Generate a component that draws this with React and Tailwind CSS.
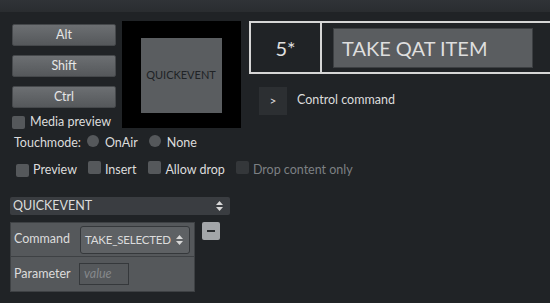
import { useState } from "react";

const font = { fontFamily: 'Lato, "Open Sans", sans-serif' };

const KeyButton = ({ label }) => (
    <button className="h-[22px] w-[104px] rounded-[2px] border border-[#45484b] bg-gradient-to-b from-[#6c6f72] to-[#55585b] text-[12.5px] text-[#e6e6e6]">
        {label}
    </button>
);

const Box = ({ disabled }) => (
    <span className={`inline-block h-[13px] w-[13px] rounded-[2px] ${disabled ? "bg-[#34373a]" : "bg-[#55585b]"}`} />
);

const Radio = () => <span className="inline-block h-[12px] w-[12px] rounded-full bg-[#55585b]" />;

const UpDown = () => (
    <svg width="7" height="10" viewBox="0 0 7 10" className="shrink-0 fill-[#d8d8d8]">
        <path d="M3.5 0 L7 4 L0 4 Z M0 6 L7 6 L3.5 10 Z" />
    </svg>
);

export default function App() {
    const [mediaPreview, setMediaPreview] = useState(false);

    return (
        <div className="h-[303px] w-[550px] overflow-hidden bg-[#202326] text-[12.5px] text-[#dcdcdc]" style={font}>
            <div className="h-[12px] bg-gradient-to-b from-[#303337] to-[#2a2d30]" />

            <div className="flex pt-[9px]">
                <div className="ml-[12px] flex w-[104px] shrink-0 flex-col gap-[9px] pt-[3px]">
                    <KeyButton label="Alt" />
                    <KeyButton label="Shift" />
                    <KeyButton label="Ctrl" />
                    <label className="-mt-[2px] flex h-[14px] items-center gap-[5px]" onClick={() => setMediaPreview(!mediaPreview)}>
                        <Box />
                        <span>Media preview</span>
                    </label>
                </div>

                <div className="ml-[6px] flex h-[107px] w-[119px] shrink-0 items-start justify-center bg-black pt-[17px]">
                    <div className="ml-[-1px] flex h-[75px] w-[81px] items-center justify-center bg-[#5a5d60] text-[11px] text-[#202326]">
                        QUICKEVENT
                    </div>
                </div>

                <div className="ml-[8px] shrink-0">
                    <div className="flex h-[53px] w-[320px] border-2 border-r-0 border-[#d6d6d6]">
                        <div className="flex w-[71px] items-center justify-center border-r-2 border-[#d6d6d6] text-[20px] text-[#e0e0e0]">
                            5*
                        </div>
                        <div className="ml-[11px] mt-[5px] flex h-[40px] w-[200px] items-center border border-[#3c3f42] bg-[#5a5d60] px-[8px] text-[20px] text-[#dedede]">
                            TAKE QAT ITEM
                        </div>
                    </div>
                    <div className="ml-[10px] mt-[13px] flex items-start gap-[10px]">
                        <button className="flex h-[28px] w-[28px] items-center justify-center bg-[#2c2f32] text-[12px] text-[#dcdcdc]">
                            &gt;
                        </button>
                        <span className="mt-[4px]">Control command</span>
                    </div>
                </div>
            </div>

            <div className="ml-[14px] mt-[7px] flex h-[14px] items-center">
                <span>Touchmode:</span>
                <span className="ml-[6px]"><Radio /></span>
                <span className="ml-[6px]">OnAir</span>
                <span className="ml-[11px]"><Radio /></span>
                <span className="ml-[6px]">None</span>
            </div>

            <div className="ml-[16px] mt-[13px] flex h-[14px] items-center">
                <Box />
                <span className="ml-[4px]">Preview</span>
                <span className="ml-[11px]"><Box /></span>
                <span className="ml-[4px]">Insert</span>
                <span className="ml-[12px]"><Box /></span>
                <span className="ml-[4px]">Allow drop</span>
                <span className="ml-[11px]"><Box disabled /></span>
                <span className="ml-[4px] text-[#7d8083]">Drop content only</span>
            </div>

            <div className="ml-[10px] mt-[20px] flex h-[18px] w-[220px] items-center justify-between rounded-[2px] bg-[#3a3d41] pl-[3px] pr-[7px]">
                <span>QUICKEVENT</span>
                <UpDown />
            </div>

            <div className="ml-[10px] mt-[7px] flex items-start gap-[7px]">
                <div className="w-[185px] border border-[#3e4144] bg-[#55585b]">
                    <div className="flex h-[34px] items-center border-b border-[#3e4144] pl-[3px]">
                        <span className="w-[66px]">Command</span>
                        <div className="flex h-[28px] w-[110px] items-center justify-between rounded-[3px] border border-[#35383b] bg-[#5e6164] pl-[4px] pr-[6px]">
                            <span className="text-[11.5px] tracking-[-0.2px]">TAKE_SELECTED</span>
                            <UpDown />
                        </div>
                    </div>
                    <div className="flex h-[34px] items-center pl-[3px]">
                        <span className="w-[65px]">Parameter</span>
                        <div className="flex h-[22px] w-[50px] items-center border border-[#35383b] px-[4px] italic text-[#85888b]">
                            value
                        </div>
                    </div>
                </div>
                <button className="flex h-[18px] w-[18px] items-center justify-center rounded-[2px] bg-[#a3a6a9]">
                    <span className="block h-[2px] w-[8px] bg-[#2a2d30]" />
                </button>
            </div>
        </div>
    );
}
